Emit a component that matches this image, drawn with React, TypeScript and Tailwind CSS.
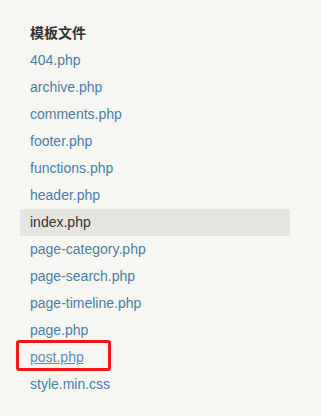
import React from "react";

const files = [
  "404.php",
  "archive.php",
  "comments.php",
  "footer.php",
  "functions.php",
  "header.php",
  "index.php",
  "page-category.php",
  "page-search.php",
  "page-timeline.php",
  "page.php",
  "post.php",
  "style.min.css",
];

export default function App() {
  return (
    <div
      className="w-[321px] h-[416px] bg-[#f6f6f2] pt-[20px] pl-[20px] overflow-hidden"
      style={{ fontFamily: '"Liberation Sans", Arial, "Noto Sans CJK SC", sans-serif' }}
    >
      <div className="w-[270px]">
        <div className="h-[27px] flex items-center pl-[10px] text-[14px] font-bold text-[#333]">
          模板文件
        </div>
        {files.map((f) => {
          const active = f === "index.php";
          const marked = f === "post.php";
          return (
            <div
              key={f}
              className={`h-[27px] flex items-center pl-[10px] text-[14px] ${
                active ? "bg-[#e4e4e0] text-[#333]" : "text-[#4a7ea8]"
              }`}
            >
              <span className={`relative ${marked ? "underline text-[#5592c0]" : ""}`}>
                {f}
                {marked && (
                  <span className="absolute left-[-14px] top-[-7px] w-[95px] h-[31px] border-[3px] border-[#f5161b] rounded-[3px]" />
                )}
              </span>
            </div>
          );
        })}
      </div>
    </div>
  );
}
